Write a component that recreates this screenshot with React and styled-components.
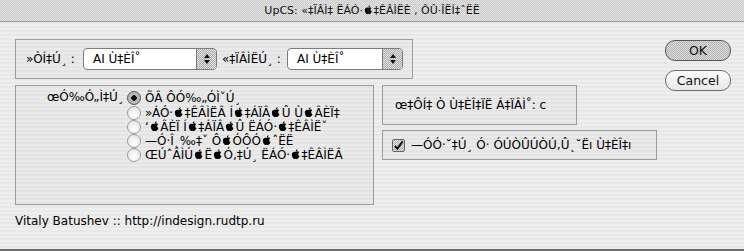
import styled, { createGlobalStyle } from "styled-components";

const GlobalStyle = createGlobalStyle`
  html, body {
    margin: 0;
    padding: 0;
    background: #ececec;
  }
  body {
    font-family: "DejaVu Sans", "Liberation Sans", sans-serif;
    font-size: 12px;
    color: #000;
  }
`;

const RadioItems = [
  ["ÕÂ ÔÓ‰„ÓÌˇÚ¸", true],
  ["»ÁÓ·*‡ÊÂÌËÂ Í *‡ÁÏÂ*Û Ù*ÂÈÏ‡", false],
  ["‘*ÂÈÏ Í *‡ÁÏÂ*Û ËÁÓ·*‡ÊÂÌËˇ", false],
  ["—Ó·Î˛‰‡ˇ Ô*ÓÔÓ*ˆËË", false],
  ["ŒÚˆÂÌÚ*Ë*Ó‚‡Ú¸ ËÁÓ·*‡ÊÂÌËÂ", false],
];

// the "р" byte shows up as the apple glyph, drawn here with a small svg
const Apple = () => (
  <AppleIcon viewBox="0 0 14 16">
    <path d="M7 4.6C5.5 3.6 1 3.7 1 8.6 1 12 3 15.5 4.8 15.5c1 0 1.4-.5 2.2-.5s1.2.5 2.2.5c1.8 0 3.3-3 3.8-4.5-1.5-.7-2.2-2-2.2-3.3 0-1.2.7-2.2 1.6-2.7-.9-1.2-2.2-1.4-2.9-1.4-1.2 0-1.9.6-2.5.9Z" />
    <path d="M7 3.9C7 2.1 8.3.7 10 .5c0 1.8-1.3 3.2-3 3.4Z" />
  </AppleIcon>
);

const Mojibake = ({ text }) => {
  const parts = text.split("*");
  return (
    <>
      {parts.map((p, i) => (
        <span key={i}>
          {i > 0 && <Apple />}
          {p}
        </span>
      ))}
    </>
  );
};

const PopupMenu = ({ width, value }) => (
  <Popup width={width}>
    <PopupValue>{value}</PopupValue>
    <PopupArrows>
      <Arrow />
      <Arrow down />
    </PopupArrows>
  </Popup>
);

const App = () => {
  return (
    <Window>
      <GlobalStyle />
      <TitleBar>
        <Mojibake text="UpCS: «‡ÏÂÌ‡ ËÁÓ·*‡ÊÂÌËÈ ‚ ÔÛ·ÎËÍ‡ˆËË" />
      </TitleBar>
      <Content>
        <Main>
          <SearchBox>
            <Label width={57}>»ÒÍ‡Ú¸ :</Label>
            <PopupMenu width={134} value="AI Ù‡ÈÎ˚" />
            <Label width={65}>«‡ÏÂÌËÚ¸ :</Label>
            <PopupMenu width={116} value="AI Ù‡ÈÎ˚" />
          </SearchBox>
          <Row>
            <FitBox>
              <FitLabel>œÓ‰Ó„Ì‡Ú¸</FitLabel>
              <RadioList>
                {RadioItems.map(([text, checked], i) => (
                  <RadioRow key={i}>
                    <Radio checked={checked} />
                    <Mojibake text={text} />
                  </RadioRow>
                ))}
              </RadioList>
            </FitBox>
            <Side>
              <FolderBox>
                <span>œ‡ÔÍ‡ Ò Ù‡ÈÎ‡ÏË Á‡ÏÂÌ˚: c</span>
              </FolderBox>
              <CheckBox>
                <Check>
                  <svg viewBox="0 0 12 12" width="11" height="11">
                    <path d="M2 6.5 4.8 9.5 10.5 1.5" fill="none" stroke="#111" strokeWidth="2.2" />
                  </svg>
                </Check>
                <span>—ÓÓ·˘‡Ú¸ Ó· ÓÚÒÛÚÒÚ‚Û˛˘Ëı Ù‡ÈÎ‡ı</span>
              </CheckBox>
            </Side>
          </Row>
        </Main>
        <Buttons>
          <Button primary>OK</Button>
          <Button>Cancel</Button>
        </Buttons>
      </Content>
      <Footer>Vitaly Batushev :: http://indesign.rudtp.ru</Footer>
    </Window>
  );
};

//styled components

const Window = styled.div`
  width: 744px;
  height: 251px;
  display: flex;
  flex-direction: column;
  box-sizing: border-box;
  border-bottom: 2px solid #6a6a6a;
  background: repeating-linear-gradient(
    to bottom,
    #eeeeee 0,
    #eeeeee 2px,
    #e8e8e8 2px,
    #e8e8e8 4px
  );
  overflow: hidden;
`;

const TitleBar = styled.div`
  height: 21px;
  flex-shrink: 0;
  display: flex;
  align-items: center;
  justify-content: center;
  border-bottom: 1px solid #9a9a9a;
  background: repeating-conic-gradient(#c9c9c9 0 25%, #e4e4e4 0 50%) 0 0 / 2px 2px;
  font-size: 11px;
  color: #111;
  white-space: nowrap;
`;

const AppleIcon = styled.svg`
  width: 0.78em;
  height: 0.86em;
  margin: 0 1px;
  vertical-align: -0.05em;
  fill: currentColor;
`;

const Content = styled.div`
  display: flex;
  padding: 17px 0 0 15px;
`;

const Main = styled.div`
  width: 642px;
  display: flex;
  flex-direction: column;
`;

const Group = styled.div`
  box-sizing: border-box;
  border: 1px solid #9c9c9c;
  background: rgba(0, 0, 0, 0.015);
  display: flex;
  white-space: nowrap;
`;

const SearchBox = styled(Group)`
  width: 398px;
  height: 40px;
  align-items: center;
  padding-left: 10px;
`;

const Label = styled.span`
  width: ${(p) => p.width}px;
  flex-shrink: 0;
`;

const Popup = styled.div`
  width: ${(p) => p.width}px;
  height: 22px;
  box-sizing: border-box;
  display: flex;
  margin-right: 5px;
  border: 1px solid #7c7c7c;
  border-radius: 4px;
  background: #fff;
  overflow: hidden;
`;

const PopupValue = styled.span`
  flex: 1;
  padding-left: 9px;
  line-height: 20px;
`;

const PopupArrows = styled.div`
  width: 19px;
  display: flex;
  flex-direction: column;
  align-items: center;
  justify-content: center;
  gap: 2px;
  border-left: 1px solid #7c7c7c;
  background: repeating-conic-gradient(#a8a8a8 0 25%, #e6e6e6 0 50%) 0 0 / 2px 2px;
`;

const Arrow = styled.div`
  width: 0;
  height: 0;
  border-left: 3px solid transparent;
  border-right: 3px solid transparent;
  ${(p) =>
    p.down ? "border-top: 4px solid #111;" : "border-bottom: 4px solid #111;"}
`;

const Row = styled.div`
  display: flex;
  gap: 8px;
  margin-top: 6px;
`;

const FitBox = styled(Group)`
  width: 361px;
  height: 120px;
  padding: 4px 0 0 31px;
  align-items: flex-start;
`;

const FitLabel = styled.span`
  width: 80px;
  line-height: 15px;
`;

const RadioList = styled.div`
  display: flex;
  flex-direction: column;
`;

const RadioRow = styled.div`
  display: flex;
  align-items: center;
  height: 14px;
  &:first-child {
    height: 15px;
    margin-bottom: 1px;
  }
`;

const Radio = styled.span`
  width: 14px;
  height: 14px;
  box-sizing: border-box;
  margin-right: 4px;
  border-radius: 50%;
  border: 1px solid ${(p) => (p.checked ? "#555" : "#9a9a9a")};
  background: ${(p) =>
    p.checked
      ? "radial-gradient(circle, #111 0 2.5px, #b8b8b8 3px)"
      : "radial-gradient(circle at 50% 70%, #ffffff, #e2e2e2)"};
  flex-shrink: 0;
`;

const Side = styled.div`
  display: flex;
  flex-direction: column;
  gap: 5px;
`;

const FolderBox = styled(Group)`
  width: 195px;
  height: 40px;
  align-items: center;
  padding-left: 12px;
`;

const CheckBox = styled(Group)`
  width: 275px;
  height: 30px;
  align-items: center;
  padding-left: 9px;
`;

const Check = styled.span`
  width: 13px;
  height: 13px;
  box-sizing: border-box;
  margin-right: 6px;
  border: 1px solid #666;
  border-radius: 2px;
  background: repeating-conic-gradient(#b0b0b0 0 25%, #e8e8e8 0 50%) 0 0 / 2px 2px;
  display: flex;
  align-items: flex-end;
  justify-content: center;
`;

const Buttons = styled.div`
  display: flex;
  flex-direction: column;
  gap: 9px;
  margin-left: 8px;
  margin-top: 1px;
`;

const Button = styled.button`
  width: 66px;
  height: 21px;
  padding: 0;
  font-family: inherit;
  font-size: 12.5px;
  color: #111;
  border-radius: 10px;
  border: 1px solid ${(p) => (p.primary ? "#555" : "#6d6d6d")};
  background: ${(p) =>
    p.primary
      ? "repeating-conic-gradient(#b4b4b4 0 25%, #dcdcdc 0 50%) 0 0 / 2px 2px"
      : "linear-gradient(#fbfbfb, #e8e8e8)"};
`;

const Footer = styled.div`
  padding: 9px 0 0 15px;
  line-height: 15px;
`;

export default App;
